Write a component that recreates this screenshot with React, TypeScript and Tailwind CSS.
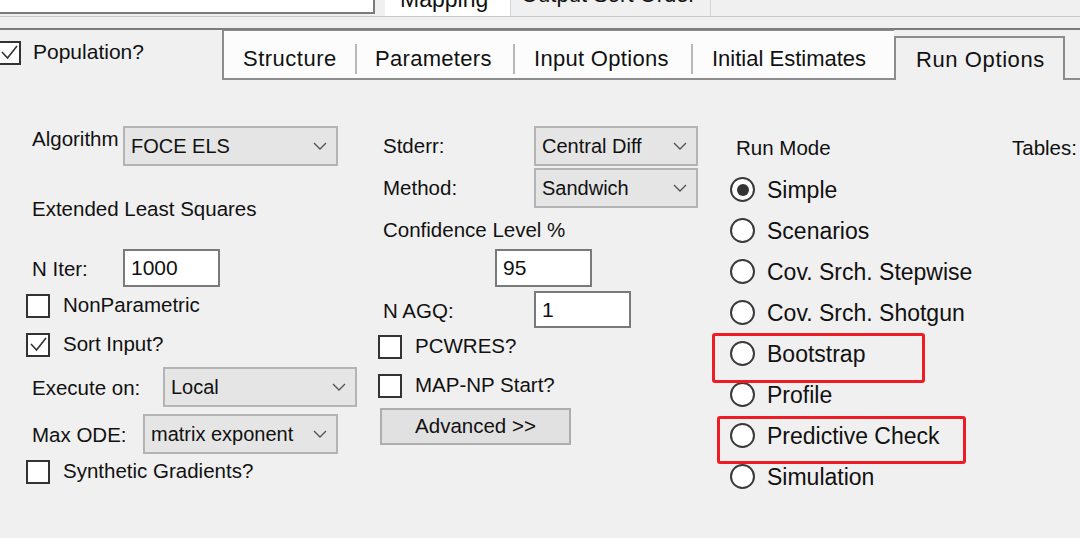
import React from "react";

function Check({ checked, className = "" }: { checked?: boolean; className?: string }) {
  return (
    <div className={`w-[24px] h-[24px] shrink-0 border-2 border-[#333] bg-white ${className}`}>
      {checked && (
        <svg viewBox="0 0 20 20" className="w-full h-full">
          <path d="M3 9 L8.5 15 L18 3" fill="none" stroke="#333" strokeWidth="1.6" />
        </svg>
      )}
    </div>
  );
}

function CheckRow({ label, checked, className = "" }: { label: string; checked?: boolean; className?: string }) {
  return (
    <div className={`flex items-center h-[24px] ${className}`}>
      <Check checked={checked} />
      <span className="ml-[13px] leading-[24px] -mt-[2px]">{label}</span>
    </div>
  );
}

function Combo({ value, w }: { value: string; w: string }) {
  return (
    <div className={`${w} h-[40px] shrink-0 flex items-center justify-between bg-[#e5e5e5] border-2 border-[#b4b4b4] pl-[6px] pr-[9px]`}>
      <span className="text-[20px]">{value}</span>
      <svg width="14" height="8" viewBox="0 0 14 8">
        <path d="M1 1 L7 7 L13 1" fill="none" stroke="#555" strokeWidth="1.4" />
      </svg>
    </div>
  );
}

function TextBox({ value, h = "h-[38px]", className = "" }: { value: string; h?: string; className?: string }) {
  return (
    <div className={`w-[97px] ${h} shrink-0 flex items-center bg-white border-2 border-[#7a7a7a] pl-[6px] text-[21px] ${className}`}>
      {value}
    </div>
  );
}

function Radio({ label, selected }: { label: string; selected?: boolean }) {
  return (
    <div className="flex items-center h-[41px]">
      <div className="ml-[18px] w-[25px] h-[25px] shrink-0 rounded-full border-2 border-[#3a3a3a] bg-white flex items-center justify-center">
        {selected && <div className="w-[12px] h-[12px] rounded-full bg-[#333]" />}
      </div>
      <span className="ml-[12px] text-[23px] leading-[28px]">{label}</span>
    </div>
  );
}

export default function App() {
  return (
    <div className="relative w-[1080px] h-[538px] overflow-hidden bg-[#f0f0f0] text-[#111] text-[20.5px] font-['Liberation_Sans',Arial,sans-serif]">
      {/* outer tab strip, clipped at the top */}
      <div className="flex h-[16px]">
        <div className="w-[375px] h-[14px] bg-white border-b-2 border-r-2 border-[#7a7a7a]" />
        <div className="ml-[10px] w-[125px] h-[16px] bg-white overflow-hidden flex items-end pl-[15px] pb-[5px]">
          <span className="text-[23px] leading-[24px]">Mapping</span>
        </div>
        <div className="w-[201px] h-[16px] border-x border-[#d4d4d4] overflow-hidden flex items-end pl-[10px] pb-[9px]">
          <span className="text-[22px] leading-[24px] whitespace-nowrap">Output Sort Order</span>
        </div>
      </div>
      <div className="h-[1px] bg-[#c8c8c8]" />
      <div className="h-[11px]" />
      <div className="h-[2px] bg-[#7d7d7d]" />

      {/* inner tab strip */}
      <div className="flex h-[50px]">
        <div className="w-[222px] pt-[10px]">
          <div className="flex items-center h-[25px]">
            <Check checked className="-ml-[3px]" />
            <span className="ml-[12px] text-[21px] leading-[24px] -mt-[1px]">Population?</span>
          </div>
        </div>
        <div className="w-[672px] h-[50px] flex items-center pt-[8px] bg-[#fcfcfc] border-l-2 border-t border-b-2 border-[#8c8c8c] text-[22px]">
          <div className="w-[131px] pl-[19px] tracking-[0.5px]">Structure</div>
          <div className="w-[2px] h-[30px] bg-[#b8b8b8]" />
          <div className="w-[156px] pl-[18px] tracking-[0.3px]">Parameters</div>
          <div className="w-[2px] h-[30px] bg-[#b8b8b8]" />
          <div className="w-[176px] pl-[19px] tracking-[0.3px]">Input Options</div>
          <div className="w-[2px] h-[30px] bg-[#b8b8b8]" />
          <div className="flex-1 pl-[19px]">Initial Estimates</div>
        </div>
        <div className="mt-[6px] w-[171px] h-[44px] flex items-center pl-[20px] border-x-2 border-t-2 border-[#8c8c8c] text-[22px] tracking-[0.6px]">
          Run Options
        </div>
        <div className="flex-1 border-b-2 border-[#8c8c8c]" />
      </div>

      {/* page content */}
      <div className="flex pl-[26px]">
        {/* left column */}
        <div className="w-[332px] flex flex-col">
          <div className="mt-[46px] h-[40px] flex items-start">
            <span className="ml-[6px] w-[91px] leading-[24px] mt-[1px]">Algorithm</span>
            <Combo value="FOCE ELS" w="w-[215px]" />
          </div>
          <div className="mt-[31px] ml-[6px] leading-[24px]">Extended Least Squares</div>
          <div className="mt-[28px] h-[38px] flex items-center">
            <span className="ml-[6px] w-[91px] leading-[24px] mt-[2px]">N Iter:</span>
            <TextBox value="1000" />
          </div>
          <CheckRow label="NonParametric" className="mt-[7px]" />
          <CheckRow label="Sort Input?" checked className="mt-[15px]" />
          <div className="mt-[10px] h-[40px] flex items-center">
            <span className="ml-[6px] w-[131px] leading-[24px] mt-[2px]">Execute on:</span>
            <Combo value="Local" w="w-[194px]" />
          </div>
          <div className="mt-[7px] h-[40px] flex items-center">
            <span className="ml-[6px] w-[111px] leading-[24px] mt-[1px]">Max ODE:</span>
            <Combo value="matrix exponent" w="w-[195px]" />
          </div>
          <CheckRow label="Synthetic Gradients?" className="mt-[6px]" />
        </div>

        {/* middle column */}
        <div className="ml-[20px] w-[320px] flex flex-col">
          <div className="mt-[46px] h-[40px] flex items-center">
            <span className="ml-[5px] w-[151px] leading-[24px]">Stderr:</span>
            <Combo value="Central Diff" w="w-[164px]" />
          </div>
          <div className="mt-[2px] h-[40px] flex items-center">
            <span className="ml-[5px] w-[151px] leading-[24px]">Method:</span>
            <Combo value="Sandwich" w="w-[164px]" />
          </div>
          <div className="mt-[10px] ml-[5px] leading-[24px]">Confidence Level %</div>
          <TextBox value="95" className="mt-[7px] ml-[117px]" />
          <div className="mt-[4px] h-[37px] flex items-center">
            <span className="ml-[5px] w-[151px] leading-[24px] mt-[3px]">N AGQ:</span>
            <TextBox value="1" h="h-[37px]" />
          </div>
          <CheckRow label="PCWRES?" className="mt-[7px]" />
          <CheckRow label="MAP-NP Start?" className="mt-[15px]" />
          <button className="mt-[10px] ml-[2px] w-[191px] h-[37px] bg-[#e1e1e1] border-2 border-[#adadad] text-[20.5px] leading-[24px] pb-[1px]">
            Advanced &gt;&gt;
          </button>
        </div>

        {/* right column */}
        <div className="ml-[14px] flex-1 flex flex-col">
          <div className="mt-[56px] h-[24px] flex leading-[24px]">
            <span className="ml-[24px] w-[276px]">Run Mode</span>
            <span>Tables:</span>
          </div>
          <div className="mt-[9px] flex flex-col">
            <Radio label="Simple" selected />
            <Radio label="Scenarios" />
            <Radio label="Cov. Srch. Stepwise" />
            <Radio label="Cov. Srch. Shotgun" />
            <Radio label="Bootstrap" />
            <Radio label="Profile" />
            <Radio label="Predictive Check" />
            <Radio label="Simulation" />
          </div>
        </div>
      </div>

      {/* red annotation boxes */}
      <div className="absolute left-[712px] top-[333px] w-[213px] h-[50px] border-[3px] border-[#ee1c25] rounded-[3px]" />
      <div className="absolute left-[717px] top-[416px] w-[249px] h-[48px] border-[3px] border-[#ee1c25] rounded-[3px]" />
    </div>
  );
}
